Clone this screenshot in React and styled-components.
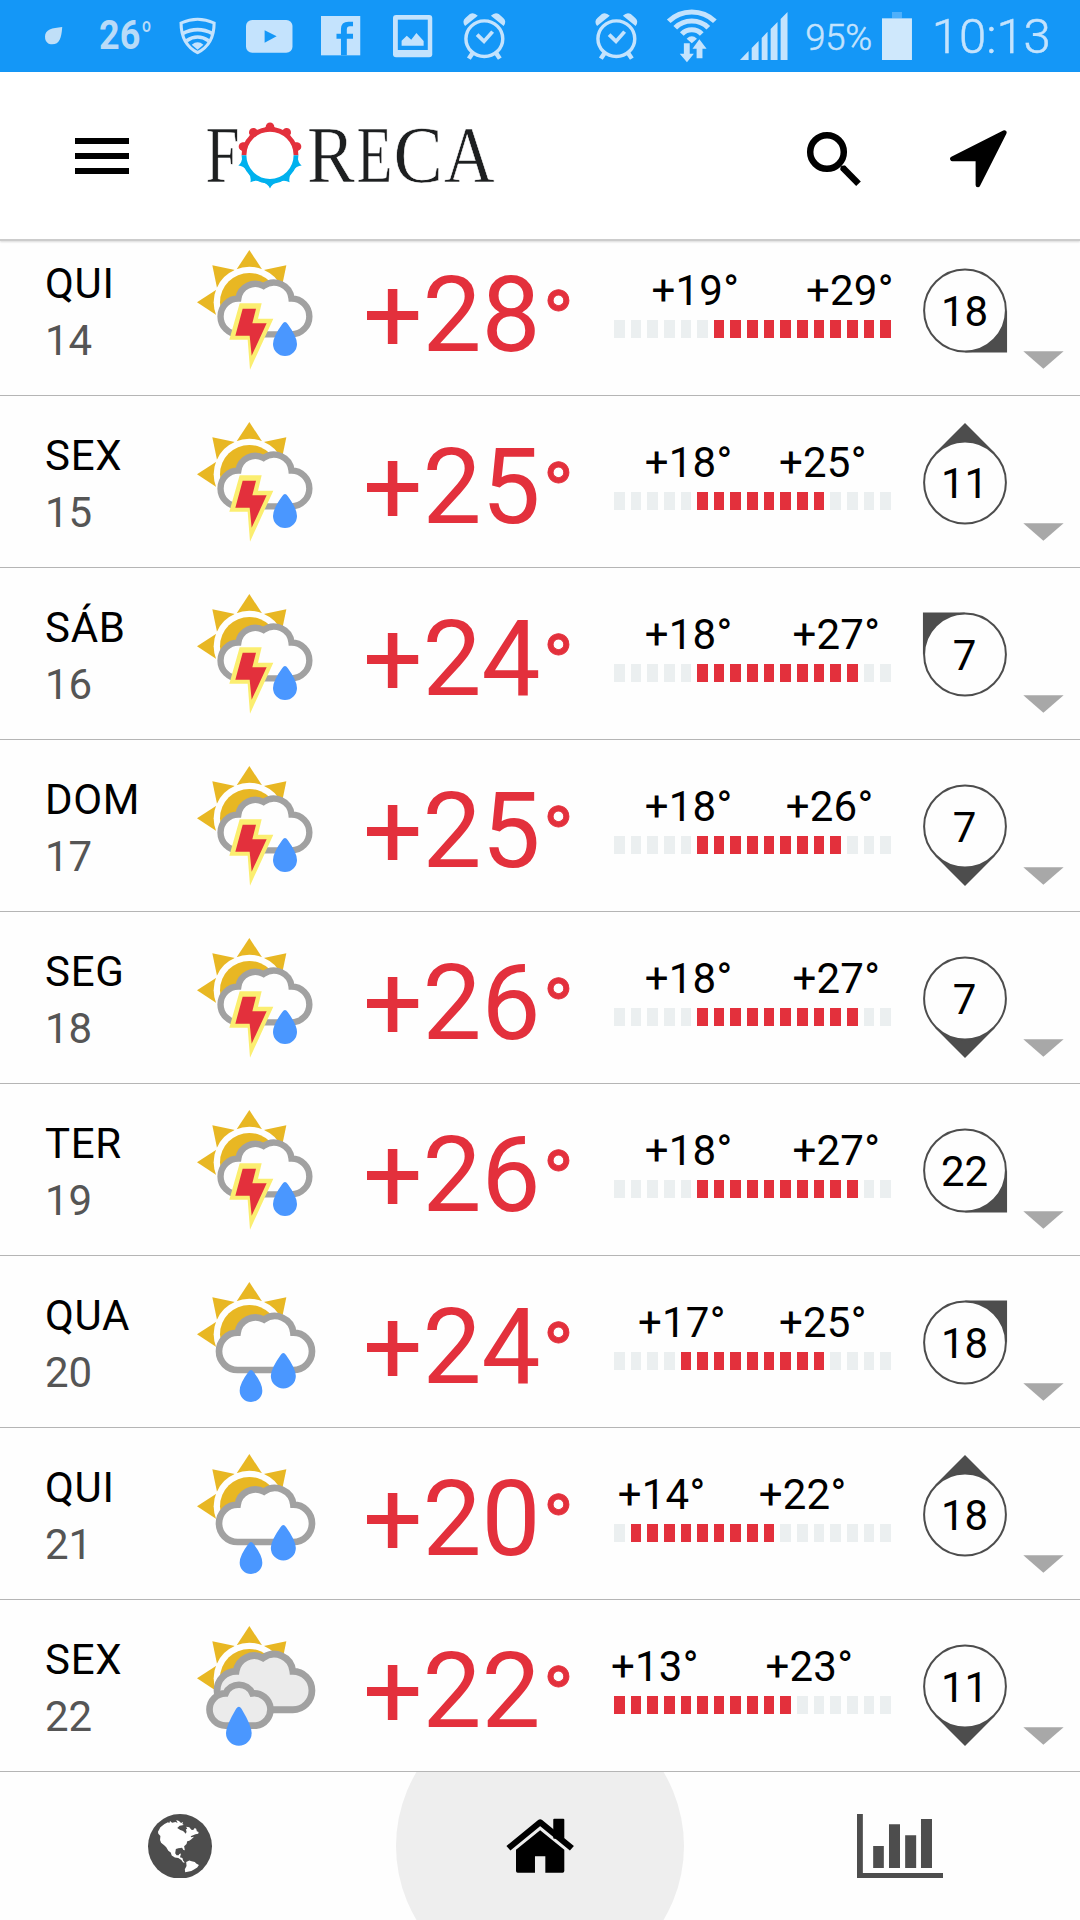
import React from 'react';
import styled, { createGlobalStyle } from 'styled-components';

const GlobalStyle = createGlobalStyle`
  html, body { margin: 0; padding: 0; background: #fff; }
  * { box-sizing: border-box; }
`;

const Screen = styled.div`
  width: 1080px;
  height: 1920px;
  display: flex;
  flex-direction: column;
  overflow: hidden;
  background: #fefefe;
  font-family: Roboto, 'Noto Sans', sans-serif;
  color: #000;
`;

/* ---------- status bar ---------- */

const StatusBar = styled.div`
  flex: none;
  height: 72px;
  display: flex;
  align-items: center;
  background: #1497f7;
  color: #c4e3fd;
`;

const StatusItem = styled.div`
  flex: none;
  width: ${(p) => p.$width}px;
  margin-left: ${(p) => p.$gap}px;
  display: flex;
`;

const StatusSvg = styled.svg`
  display: block;
  flex: none;
  overflow: visible;
  fill: #c4e3fd;
`;

const StatusText = styled.span`
  white-space: nowrap;
  font-size: ${(p) => p.$size}px;
  font-weight: ${(p) => p.$weight};
  line-height: 72px;
  padding-top: ${(p) => p.$drop || 0}px;
  letter-spacing: ${(p) => p.$spacing || 0}px;
  -webkit-text-stroke: ${(p) => p.$stroke || 0}px #c4e3fd;
`;

const StatusTemp = styled(StatusText)`
  color: #b9dbf8;
  transform: scaleX(0.9);
  transform-origin: left;
`;

const SmallDegree = styled.span`
  font-size: 21px;
  font-weight: 500;
  line-height: 20px;
  color: #b9dbf8;
  padding-top: 15px;
  margin-left: -3px;
  transform: scaleX(0.75);
  transform-origin: left;
`;

function StatusGlyph({ box, gap, children }) {
  const [x0, y0, x1, y1] = box;
  const w = (x1 - x0) / 2.904;
  const h = (y1 - y0) / 3;
  return (
    <StatusItem $width={w} $gap={gap}>
      <StatusSvg width={w} height={h} viewBox={`${x0} ${y0} ${x1 - x0} ${y1 - y0}`} preserveAspectRatio="none">
        {children}
      </StatusSvg>
    </StatusItem>
  );
}

function Alarm({ gap }) {
  return (
    <StatusGlyph box={[1345, 38, 1470, 178]} gap={gap}>
      <circle cx="1407" cy="115" r="53.5" fill="none" stroke="#c4e3fd" strokeWidth="10" />
      <path d="M1386 103 L1406 123 L1431 94" fill="none" stroke="#c4e3fd" strokeWidth="11" />
      <path d="M1351 77 Q1341 63 1352 53 L1365 41 Q1376 34 1388 46 Z" />
      <path d="M1463 77 Q1473 63 1462 53 L1449 41 Q1438 34 1426 46 Z" />
      <path d="M1373 158 L1362 175 M1441 158 L1452 175" fill="none" stroke="#c4e3fd" strokeWidth="13" />
    </StatusGlyph>
  );
}

function Status() {
  return (
    <StatusBar>
      <StatusGlyph box={[130, 83, 180, 136]} gap={45}>
        <path d="M180 83 C150 86 130 90 130 112 C130 128 140 135 151 135 C172 135 178 116 180 83Z" fill="#c0dff8" />
      </StatusGlyph>
      <StatusItem $width={52} $gap={37}>
        <StatusTemp $size={40} $weight={700}>26</StatusTemp>
        <SmallDegree>o</SmallDegree>
      </StatusItem>
      <StatusGlyph box={[520, 50, 627, 162]} gap={28}>
        <path d="M526 68 Q574 46 622 68 C622 104 610 138 574 157 C538 138 526 104 526 68Z" fill="none" stroke="#c4e3fd" strokeWidth="9" />
        <path d="M530 100 Q574 76 618 100 M542 121 Q574 99 606 121" fill="none" stroke="#c4e3fd" strokeWidth="11" />
        <path d="M557 133 Q574 119 591 133 L574 148Z" />
      </StatusGlyph>
      <StatusGlyph box={[713, 58, 848, 156]} gap={29.5}>
        <rect x="713" y="58" width="135" height="98" rx="18" />
        <path d="M767 89 L802 107 L767 126Z" fill="#1497f7" />
      </StatusGlyph>
      <StatusGlyph box={[932, 49, 1046, 167]} gap={29}>
        <rect x="932" y="49" width="114" height="118" />
        <path d="M990 167 V117 H977 V102 H990 V88 Q990 66 1012 66 H1025 V80 H1016 Q1007 80 1007 89 V102 H1025 V117 H1007 V167Z" fill="#1497f7" />
      </StatusGlyph>
      <StatusGlyph box={[1142, 44, 1256, 171]} gap={32.5}>
        <rect x="1142" y="44" width="114" height="127" rx="9" />
        <rect x="1156" y="58" width="87" height="91" fill="#1497f7" />
        <path d="M1167 136 V121 L1182 106 L1195 118 L1210 98 L1231 122 V136Z" />
      </StatusGlyph>
      <Alarm gap={30.5} />
      <Alarm gap={89} />
      <StatusGlyph box={[370, 26, 513, 186]} gap={29}>
        <path d="M375 63 A94 94 0 0 1 509 63 M394 82 A67 67 0 0 1 490 82 M413 101 A40 40 0 0 1 471 101" fill="none" stroke="#c4e3fd" strokeWidth="15" />
        <path d="M427 115 Q442 101 457 115 L442 129Z" />
        <path d="M419 129 H436 V160 H448 L428 186 L407 160 H419Z" />
        <path d="M464 117 L485 145 H473 V174 H456 V145 H444Z" />
      </StatusGlyph>
      <StatusGlyph box={[582, 36, 720, 180]} gap={24}>
        <path d="M582 180 L607 153 V180Z M616 144 L636 123 V180 H616Z M645 114 L662 95 V180 H645Z M671 87 L691 66 V180 H671Z M700 57 L720 36 V180 H700Z" />
      </StatusGlyph>
      <StatusItem $width={68} $gap={18}>
        <StatusText $size={36.5} $weight={300} $spacing={-0.3} $drop={3} $stroke={0.5}>95%</StatusText>
      </StatusItem>
      <StatusGlyph box={[993, 33, 1080, 177]} gap={8.5}>
        <rect x="1022" y="33" width="29" height="19" fill="#4fb0fb" />
        <rect x="993" y="52" width="87" height="125" fill="#cfe8fc" />
      </StatusGlyph>
      <StatusItem $width={120} $gap={20}>
        <StatusText $size={49} $weight={300} $drop={2} $stroke={0.5}>10:13</StatusText>
      </StatusItem>
    </StatusBar>
  );
}

/* ---------- header ---------- */

const Header = styled.header`
  flex: none;
  height: 169px;
  display: flex;
  align-items: flex-start;
  background: #fff;
  border-bottom: 2px solid #ccc;
  box-shadow: 0 1px 2px rgba(0, 0, 0, 0.15);
  z-index: 1;
`;

const MenuButton = styled.div`
  display: flex;
  flex-direction: column;
  gap: 9px;
  margin: 66px 0 0 75px;
  width: 54px;
`;

const MenuLine = styled.div`
  height: 6px;
  background: #000;
`;

const Logo = styled.svg`
  display: block;
  margin: 24px 0 0 71px;
  font-family: 'Liberation Serif', serif;
  fill: #1d1f20;
`;

const HeaderIcons = styled.div`
  display: flex;
  gap: 89px;
  margin: 58px 73px 0 auto;
`;

/* character, left edge, horizontal scale */
const LETTERS = [
  ['F', 5.5, 0.76],
  ['R', 107, 0.89],
  ['E', 156.5, 0.73],
  ['C', 193.5, 0.92],
  ['A', 244, 0.87],
];

function ForecaLogo() {
  const bumps = [-72, -36, 0, 36, 72];
  return (
    <Logo width="310" height="124" viewBox="0 -20 310 124">
      {LETTERS.map(([ch, x, s]) => (
        <text key={ch} fontSize="80.5" stroke="#fff" strokeWidth="0.6" transform={`translate(${x} 65.8) scale(${s} 1)`}>
          {ch}
        </text>
      ))}
      <g transform="translate(70 39.3)">
        {bumps.map((a) => (
          <g key={a} fill="#e3303c" transform={`rotate(${a})`}>
            <circle cx="0" cy="-28.4" r="4.3" />
            <path d="M-8.5 -26 Q-4 -27 -3.5 -30 H3.5 Q4 -27 8.5 -26Z" />
          </g>
        ))}
        {bumps.map((a) => (
          <path key={a} d="M-8 26.5 Q-2 28.5 0 33.3 Q2 28.5 8 26.5Z" fill="#00b1ee" transform={`rotate(${a})`} />
        ))}
        <path d="M-26 0 A26 26 0 0 1 26 0" fill="none" stroke="#e3303c" strokeWidth="4.8" />
        <path d="M-26 0 A26 26 0 0 0 26 0" fill="none" stroke="#00b1ee" strokeWidth="4.8" />
      </g>
    </Logo>
  );
}

function TopBar() {
  return (
    <Header>
      <MenuButton>
        <MenuLine />
        <MenuLine />
        <MenuLine />
      </MenuButton>
      <ForecaLogo />
      <HeaderIcons>
        <svg width="55" height="58" viewBox="806 130 55 58">
          <circle cx="827" cy="152" r="16.8" fill="none" stroke="#000" strokeWidth="6.5" />
          <path d="M842.5 167.5 L858.5 183.7" stroke="#000" strokeWidth="6.5" />
          <circle cx="843.3" cy="168.3" r="2.9" />
        </svg>
        <svg width="57" height="58" viewBox="950 130 57 58">
          <path
            d="M1004.3 132.6 L952.4 158.9 H977.9 V184.9Z"
            fill="#000"
            stroke="#000"
            strokeWidth="4.6"
            strokeLinejoin="round"
          />
        </svg>
      </HeaderIcons>
    </Header>
  );
}

/* ---------- forecast list ---------- */

const List = styled.main`
  flex: 1;
  min-height: 0;
  display: flex;
  flex-direction: column;
  justify-content: flex-end;
  overflow: hidden;
`;

const Row = styled.section`
  flex: none;
  height: 172px;
  display: grid;
  grid-template-columns: 180px 183px 248px 300px 108px 61px;
  align-items: start;
  border-bottom: 1px solid #b5b5b5;
`;

const DayCell = styled.div`
  padding: 31px 0 0 45px;
  font-size: 42px;
  line-height: 57px;
  letter-spacing: 0.7px;
`;

const DateNumber = styled.div`
  color: #555;
  letter-spacing: 0;
`;

const IconCell = styled.div`
  padding-top: 4px;
`;

const WeatherSvg = styled.svg`
  display: block;
`;

const Temperature = styled.div`
  font-size: 105px;
  line-height: 184px;
  height: 171px;
  color: #e3303c;
  white-space: nowrap;
`;

const DegreeSign = styled.span`
  font-size: 85px;
  line-height: 1;
  margin-left: 2px;
  -webkit-text-stroke: 0.9px #e3303c;
`;

const RangeCell = styled.div`
  padding-top: 42px;
`;

const RangeLabels = styled.div`
  display: flex;
  height: 50px;
  font-size: 42px;
  line-height: 50px;
  letter-spacing: 0.2px;
  white-space: nowrap;
`;

const RangeLabel = styled.span`
  width: 90px;
  flex: none;
  margin-left: ${(p) => p.$offset}px;
`;

const Bars = styled.div`
  display: flex;
  justify-content: space-between;
  width: 277px;
  margin: 4px 0 0 3px;
`;

const Bar = styled.div`
  width: 10.6px;
  height: 18px;
  background: ${(p) => (p.$on ? '#e3303c' : '#ebeff0')};
`;

const WindCell = styled.div`
  display: grid;
  place-items: center;
  height: 172px;
  & > * {
    grid-area: 1 / 1;
  }
`;

const WindSvg = styled.svg`
  display: block;
  overflow: visible;
`;

const WindNumber = styled.span`
  font-size: 42px;
  line-height: 50px;
  padding: 4px 1px 0 0;
`;

const Expand = styled.svg`
  display: block;
  margin: 127px 0 0 4px;
`;

const SUN = '#e8b723';
const GREY = '#a1a1a1';
const CLOUD =
  'M173 330 A56 56 0 0 1 173 218 A54 54 0 0 1 252 179 A55.5 55.5 0 0 1 340 218 A56 56 0 0 1 340 330Z';

function Sun() {
  return (
    <g fill={SUN}>
      {[-90, -45, 0, 45].map((a) => (
        <path key={a} d="M208 66 L246 124 H170Z" transform={`rotate(${a} 208 223)`} />
      ))}
      <circle cx="208" cy="223" r="107" fill="#fefefe" />
      <circle cx="208" cy="223" r="88" />
    </g>
  );
}

function Drop({ x, top, y, r }) {
  return (
    <path
      fill="#4a97ff"
      d={`M${x - 8} ${top + 6} Q${x} ${top - 6} ${x + 8} ${top + 6} Q${x + r} ${y - 22} ${x + r} ${y} A${r} ${r} 0 0 1 ${x - r} ${y} Q${x - r} ${y - 22} ${x - 8} ${top + 6}Z`}
    />
  );
}

function WeatherIcon({ kind }) {
  return (
    <WeatherSvg width="144" height="144" viewBox="0 0 432 432">
      <Sun />
      {kind === 'storm' && (
        <>
          <path d={CLOUD} transform="translate(113 152) scale(0.955 0.96) translate(-108 -156)" fill="#fefefe" stroke={GREY} strokeWidth="20" />
          <path d="M179 226 H245 L234 272 H280 L210 425 L203 335 H148Z" fill="#fbee70" />
          <path d="M188 242 H228 L217 286 H260 L215 383 L209 323 H166Z" fill="#e3303c" />
          <Drop x={315} top={282} y={348} r={36} />
        </>
      )}
      {kind === 'rain' && (
        <>
          <path d={CLOUD} fill="#fefefe" stroke={GREY} strokeWidth="20" />
          <Drop x={310} top={279} y={348} r={37.5} />
          <Drop x={213} top={330} y={392} r={34} />
        </>
      )}
      {kind === 'cloudy' && (
        <>
          <path d={CLOUD} transform="translate(102 138) scale(1.02 1.03) translate(-108 -156)" fill="#ebebeb" stroke={GREY} strokeWidth="20" />
          <path
            d="M137 365 A48.5 48.5 0 0 1 137 268 A44 44 0 0 1 217 268 A48.5 48.5 0 1 1 228 365Z"
            fill="#ebebeb"
            stroke={GREY}
            strokeWidth="20"
          />
          <Drop x={176.5} top={308} y={387} r={38.5} />
        </>
      )}
    </WeatherSvg>
  );
}

const SCALE_MIN = 13;
const SCALE_STEPS = Array.from({ length: 17 }, (_, i) => SCALE_MIN + i);

function Range({ low, high }) {
  const lowX = (low - SCALE_MIN) * 6.75;
  const highX = 168 + (high - 25) * 6.75;
  return (
    <RangeCell>
      <RangeLabels>
        <RangeLabel $offset={lowX}>{`+${low}°`}</RangeLabel>
        <RangeLabel $offset={highX - lowX - 90}>{`+${high}°`}</RangeLabel>
      </RangeLabels>
      <Bars>
        {SCALE_STEPS.map((t) => (
          <Bar key={t} $on={t >= low && t <= high} />
        ))}
      </Bars>
    </RangeCell>
  );
}

function Wind({ speed, angle }) {
  return (
    <WindCell>
      <WindSvg width="108" height="108" viewBox="-54 -54.5 108 108">
        <path d="M0 -59.5 L29.7 -29.8 H-29.7Z" fill="#4d4d4d" transform={`rotate(${angle})`} />
        <circle r="40.9" fill="#fefefe" stroke="#4d4d4d" strokeWidth="2" />
      </WindSvg>
      <WindNumber>{speed}</WindNumber>
    </WindCell>
  );
}

const DAYS = [
  { day: 'QUI', date: 14, kind: 'storm', temp: 28, low: 19, high: 29, wind: 18, angle: 135 },
  { day: 'SEX', date: 15, kind: 'storm', temp: 25, low: 18, high: 25, wind: 11, angle: 0 },
  { day: 'SÁB', date: 16, kind: 'storm', temp: 24, low: 18, high: 27, wind: 7, angle: -45 },
  { day: 'DOM', date: 17, kind: 'storm', temp: 25, low: 18, high: 26, wind: 7, angle: 180 },
  { day: 'SEG', date: 18, kind: 'storm', temp: 26, low: 18, high: 27, wind: 7, angle: 180 },
  { day: 'TER', date: 19, kind: 'storm', temp: 26, low: 18, high: 27, wind: 22, angle: 135 },
  { day: 'QUA', date: 20, kind: 'rain', temp: 24, low: 17, high: 25, wind: 18, angle: 45 },
  { day: 'QUI', date: 21, kind: 'rain', temp: 20, low: 14, high: 22, wind: 18, angle: 0 },
  { day: 'SEX', date: 22, kind: 'cloudy', temp: 22, low: 13, high: 23, wind: 11, angle: 180 },
];

function DayRow({ d }) {
  return (
    <Row>
      <DayCell>
        <div>{d.day}</div>
        <DateNumber>{d.date}</DateNumber>
      </DayCell>
      <IconCell>
        <WeatherIcon kind={d.kind} />
      </IconCell>
      <Temperature>
        {`+${d.temp}`}
        <DegreeSign>°</DegreeSign>
      </Temperature>
      <Range low={d.low} high={d.high} />
      <Wind speed={d.wind} angle={d.angle} />
      <Expand width="41" height="18" viewBox="0 0 41 18">
        <path d="M0.3 0.3 H40.6 L20.4 17.8Z" fill="#a8a8a8" />
      </Expand>
    </Row>
  );
}

/* ---------- bottom navigation ---------- */

const BottomNav = styled.nav`
  flex: none;
  height: 148px;
  display: grid;
  grid-template-columns: repeat(3, 360px);
  background: #fefefe;
  overflow: hidden;
`;

const Tab = styled.div`
  height: 148px;
  display: flex;
  align-items: center;
  justify-content: center;
`;

const ActiveDisc = styled.div`
  flex: none;
  width: 288px;
  height: 288px;
  border-radius: 50%;
  background: #eee;
  display: flex;
  align-items: center;
  justify-content: center;
`;

function Navigation() {
  return (
    <BottomNav>
      <Tab>
        <svg width="64" height="64.6" viewBox="430 222 186 194" preserveAspectRatio="none">
          <ellipse cx="523" cy="319" rx="93" ry="97" fill="#4d4d4d" />
          <path
            fill="#fff"
            d="M459 275 L466 262 L478 252 L488 247 L492 249 L494 243 L500 248 L510 246 L516 249 L512 240 L520 243 L526 249 L532 246 L530 252 L534 255 L522 257 L515 264 L524 270 L532 273 L540 281 L542 275 L540 268 L544 267 L541 260 L550 262 L556 269 L560 270 L564 268 L565 264 L570 266 L572 274 L577 276 L576 281 L568 283 L554 289 L556 292 L564 290 L556 298 L550 302 L544 304 L542 312 L535 319 L537 331 L533 330 L529 323 L518 325 L511 327 L509 340 L513 346 L519 346 L521 342 L526 341 L523 352 L530 354 L532 362 L537 368 L532 368 L527 360 L518 354 L508 353 L499 347 L496 338 L489 332 L483 322 L477 316 L468 308 L465 300 L466 288 L460 281Z M541 366 L550 362 L557 364 L566 366 L570 371 L578 375 L573 383 L565 388 L556 393 L538 397 L537 388 L542 378Z"
          />
        </svg>
      </Tab>
      <Tab>
        <ActiveDisc>
          <svg width="69" height="58.3" viewBox="-99 232 200 175" preserveAspectRatio="none">
            <path d="M-92 326 L0 248 L92 326" fill="none" stroke="#000" strokeWidth="18" strokeLinejoin="round" />
            <rect x="38" y="237" width="32" height="60" rx="3" />
            <path d="M0 272 L70 330 V394 Q70 399 65 399 H15 V350 H-15 V399 H-65 Q-70 399 -70 394 V330Z" />
          </svg>
        </ActiveDisc>
      </Tab>
      <Tab>
        <svg width="86" height="64.6" viewBox="920 222 250 194" preserveAspectRatio="none">
          <path
            fill="#4d4d4d"
            d="M920 222 H937 V399 H1170 V416 H920Z M967 318 H998 V384 H967Z M1013 253 H1045 V384 H1013Z M1060 286 H1092 V384 H1060Z M1106 237 H1138 V384 H1106Z"
          />
        </svg>
      </Tab>
    </BottomNav>
  );
}

export default function App() {
  return (
    <Screen>
      <GlobalStyle />
      <Status />
      <TopBar />
      <List>
        {DAYS.map((d) => (
          <DayRow key={d.date} d={d} />
        ))}
      </List>
      <Navigation />
    </Screen>
  );
}
